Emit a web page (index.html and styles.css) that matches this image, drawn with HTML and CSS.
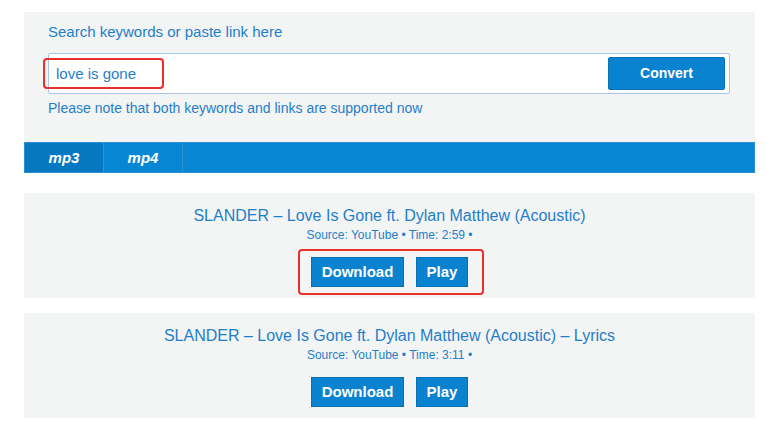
FILE: index.html
```html
<!DOCTYPE html>
<html lang="en">
<head>
  <meta charset="UTF-8">
  <title>Search</title>
  <link rel="stylesheet" href="styles.css">
</head>
<body>
<div class="page">
  <div class="search">
    <div class="label">Search keywords or paste link here</div>
    <div class="box">
      <span class="query">love is gone</span>
      <span class="mark mark-query"></span>
      <span class="convert">Convert</span>
    </div>
    <div class="note">Please note that both keywords and links are supported now</div>
  </div>
  <ul class="tabs">
    <li class="current">mp3</li>
    <li>mp4</li>
  </ul>
  <div class="result">
    <div class="title">SLANDER – Love Is Gone ft. Dylan Matthew (Acoustic)</div>
    <div class="meta">Source: YouTube • Time: 2:59 •</div>
    <div class="btns">
      <span class="btn btn-down">Download</span>
      <span class="btn btn-play">Play</span>
      <span class="mark mark-btns"></span>
    </div>
  </div>
  <div class="result">
    <div class="title">SLANDER – Love Is Gone ft. Dylan Matthew (Acoustic) – Lyrics</div>
    <div class="meta">Source: YouTube • Time: 3:11 •</div>
    <div class="btns">
      <span class="btn btn-down">Download</span>
      <span class="btn btn-play">Play</span>
    </div>
  </div>
</div>
</body>
</html>
```

FILE: styles.css
```css
* {
  padding: 0;
  margin: 0;
  list-style: none;
  box-sizing: border-box;
}

body {
  background: #fff;
  font-family: "Liberation Sans", Arial, sans-serif;
  color: #1f7fc9;
}

.page {
  width: 731px;
  margin: 12px 0 0 24px;
}

.search {
  background: #f3f4f4;
  padding: 10px 25px 24px 24px;
}

.label {
  font-size: 15px;
  line-height: 20px;
  margin-bottom: 11px;
}

.box {
  position: relative;
  display: flex;
  align-items: center;
  height: 41px;
  padding: 3px 4px 3px 7px;
  background: #fff;
  border: 1px solid #a9c6ea;
  border-radius: 2px;
}

.query {
  flex: 1;
  font-size: 15px;
}

.convert {
  width: 117px;
  height: 33px;
  line-height: 31px;
  text-align: center;
  background: #0983cf;
  border: 1px solid #0a73b8;
  border-radius: 2px;
  color: #fff;
  font-size: 14px;
  font-weight: bold;
}

.note {
  font-size: 14px;
  line-height: 20px;
  margin-top: 4px;
}

.mark {
  position: absolute;
  border: 2px solid #e8312c;
  border-radius: 4px;
}

.mark-query {
  left: -6px;
  top: 4px;
  width: 121px;
  height: 31px;
}

.tabs {
  display: flex;
  height: 31px;
  background: #0787d3;
  border: 1px solid #2b8fd6;
}

.tabs li {
  width: 79px;
  line-height: 29px;
  text-align: center;
  color: #fff;
  font-size: 15px;
  font-weight: bold;
  font-style: italic;
  border-right: 1px solid #2c95da;
}

.tabs li.current {
  background: #0678c1;
}

.result {
  background: #f3f4f4;
  margin-top: 20px;
  padding: 13px 0 11px;
  text-align: center;
}

.result + .result {
  margin-top: 15px;
}

.title {
  font-size: 16px;
  line-height: 20px;
}

.meta {
  font-size: 12px;
  line-height: 14px;
  margin-top: 2px;
}

.btns {
  position: relative;
  display: inline-flex;
  gap: 12px;
  margin-top: 15px;
  vertical-align: top;
}

.btn {
  height: 30px;
  line-height: 28px;
  text-align: center;
  background: #0983cf;
  border: 1px solid #0a6fb3;
  color: #fff;
  font-size: 15px;
  font-weight: bold;
}

.btn-down {
  width: 93px;
}

.btn-play {
  width: 52px;
}

.mark-btns {
  left: -13px;
  top: -8px;
  width: 186px;
  height: 46px;
}
```
